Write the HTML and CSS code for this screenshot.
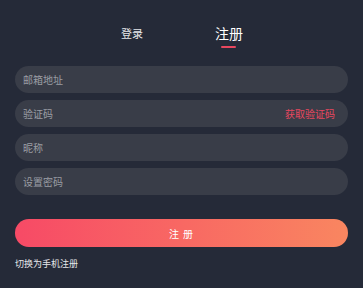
FILE: index.html
```html
<!DOCTYPE html>
<html lang="zh-CN">
<head>
    <meta charset="UTF-8">
    <meta name="viewport" content="width=device-width, initial-scale=1.0">
    <title>注册</title>
    <link rel="stylesheet" href="styles.css">
</head>
<body>
    <div class="tabs">
        <div class="tab">登录</div>
        <div class="tab active">注册</div>
    </div>

    <form class="form">
        <div class="field">
            <input type="text" placeholder="邮箱地址">
        </div>
        <div class="field">
            <input type="text" placeholder="验证码">
            <span class="code-link">获取验证码</span>
        </div>
        <div class="field">
            <input type="text" placeholder="昵称">
        </div>
        <div class="field">
            <input type="password" placeholder="设置密码">
        </div>

        <button type="button" class="submit">注 册</button>
        <div class="switch">切换为手机注册</div>
    </form>
</body>
</html>
```

FILE: styles.css
```css
/* Estilo Global */
body {
    margin: 0;
    padding: 0;
    font-family: "Noto Sans CJK SC", "Noto Sans", sans-serif;
    background-color: #252a38;
    color: #fff;
    height: 288px;
    overflow: hidden;
}

.tabs {
    display: flex;
    justify-content: center;
    padding-top: 24px;
    margin-left: -2px;
}

.tab {
    width: 97px;
    text-align: center;
    font-size: 11px;
    line-height: 18px;
    color: #e6e7ea;
    position: relative;
}

.tab.active {
    font-size: 14px;
    color: #fff;
}

.tab.active::after {
    content: "";
    position: absolute;
    left: 40px;
    top: 22px;
    width: 15px;
    height: 2px;
    background-color: #e8475f;
    border-radius: 1px;
}

.form {
    padding: 0 15px;
    margin-top: 24px;
}

.field {
    display: flex;
    align-items: center;
    height: 27px;
    background-color: #393d48;
    border-radius: 14px;
    margin-bottom: 7px;
    padding: 0 13px 0 8px;
}

.field input {
    flex: 1;
    min-width: 0;
    background: transparent;
    border: none;
    outline: none;
    color: #fff;
    font-family: inherit;
    font-size: 10px;
    padding: 0;
}

.field input::placeholder {
    color: #9b9da4;
}

.code-link {
    color: #e8475f;
    font-size: 10px;
}

.submit {
    display: block;
    width: 100%;
    height: 28px;
    margin-top: 24px;
    border: none;
    border-radius: 14px;
    background: linear-gradient(to right, #f74a66, #f98660);
    color: #fff;
    font-family: inherit;
    font-size: 10px;
    letter-spacing: 1px;
    cursor: pointer;
}

.switch {
    margin-top: 10px;
    font-size: 9px;
    color: #e6e7ea;
}
```
